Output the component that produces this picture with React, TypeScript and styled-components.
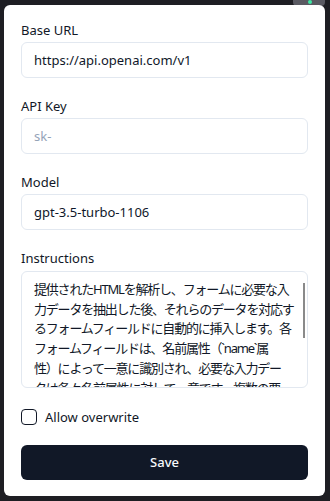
import { createGlobalStyle } from "styled-components";
import styled from "styled-components";

const Global = createGlobalStyle`
  html, body {
    margin: 0;
    padding: 0;
    background: #1e1e23;
  }
  * {
    box-sizing: border-box;
  }
`;

const Page = styled.div`
  position: relative;
  width: 330px;
  height: 501px;
  padding: 5px 5px 5px 4px;
  background: #1e1e23;
  font-family: "Noto Sans", "Noto Sans CJK JP", sans-serif;
`;

// the tab of the window behind, peeking out at the top
const BackTab = styled.div`
  position: absolute;
  top: -4px;
  right: 5px;
  width: 32px;
  height: 10px;
  border-radius: 4px;
  background: #5a5a62;

  &::after {
    content: "";
    position: absolute;
    left: 15px;
    top: 4px;
    width: 4px;
    height: 4px;
    border-radius: 50%;
    background: #3ee8a4;
  }
`;

const Panel = styled.form`
  position: relative;
  height: 491px;
  background: #ffffff;
  border-radius: 6px;
  padding: 15px 17px 16px;
  display: flex;
  flex-direction: column;
  gap: 18px;
`;

const Field = styled.div`
  display: flex;
  flex-direction: column;
  gap: 2px;
`;

const Label = styled.label`
  font-size: 13px;
  line-height: 20px;
  color: #111827;
`;

const Input = styled.input`
  height: 36px;
  width: 100%;
  padding: 0 12px;
  border: 1px solid #e2e8f0;
  border-radius: 6px;
  font-family: inherit;
  font-size: 13px;
  color: #0f172a;
  background: #fff;
  outline: none;

  &::placeholder {
    color: #94a3b8;
  }
`;

const AreaWrap = styled.div`
  position: relative;
  margin-top: 1px;
`;

const TextArea = styled.textarea`
  display: block;
  height: 117px;
  width: 100%;
  padding: 8px 4px 8px 12px;
  border: 1px solid #e2e8f0;
  border-radius: 6px;
  font-family: "Noto Sans", "Noto Sans CJK JP", sans-serif;
  font-size: 13px;
  letter-spacing: -1.2px;
  line-height: 19.7px;
  color: #111827;
  resize: none;
  outline: none;
  white-space: pre;
  overflow: hidden;
`;

// scroll thumb drawn over the textarea (headless hides native scrollbars)
const Thumb = styled.div`
  position: absolute;
  top: 12px;
  right: 3px;
  width: 2px;
  height: 55px;
  background: #8a8a8a;
`;

const CheckRow = styled.label`
  display: flex;
  align-items: center;
  gap: 8px;
  height: 20px;
  margin-top: 1px;
  font-size: 13px;
  color: #111827;
`;

const Box = styled.input`
  appearance: none;
  margin: 0;
  width: 16px;
  height: 16px;
  border: 1.5px solid #111827;
  border-radius: 4px;
  background: #fff;
`;

const SaveButton = styled.button`
  height: 36px;
  width: 100%;
  border: none;
  border-radius: 6px;
  background: #111827;
  color: #f8fafc;
  font-family: inherit;
  font-size: 13px;
  font-weight: 500;
`;

const instructions = [
  "提供されたHTMLを解析し、フォームに必要な入",
  "力データを抽出した後、それらのデータを対応す",
  "るフォームフィールドに自動的に挿入します。各",
  "フォームフィールドは、名前属性（`name`属",
  "性）によって一意に識別され、必要な入力デー",
  "タは各々名前属性に対して一意です。複数の要",
  "素が同じ名前属性を持つ場合は、最初に見つか",
  "った要素に値が挿入されます。入力データはJS",
  "ON形式で返され、キーは名前属性、値は入力",
  "値です。値が不明な場合は空文字列を設定して",
  "ください。余計な説明は不要です。",
].join("\n");

export default function App() {
  return (
    <>
      <Global />
      <Page>
        <BackTab />
        <Panel onSubmit={(e) => e.preventDefault()}>
          <Field>
            <Label>Base URL</Label>
            <Input defaultValue="https://api.openai.com/v1" />
          </Field>
          <Field>
            <Label>API Key</Label>
            <Input placeholder="sk-" />
          </Field>
          <Field>
            <Label>Model</Label>
            <Input defaultValue="gpt-3.5-turbo-1106" />
          </Field>
          <Field>
            <Label>Instructions</Label>
            <AreaWrap>
              <TextArea wrap="off" defaultValue={instructions} />
              <Thumb />
            </AreaWrap>
          </Field>
          <CheckRow>
            <Box type="checkbox" />
            Allow overwrite
          </CheckRow>
          <SaveButton type="submit">Save</SaveButton>
        </Panel>
      </Page>
    </>
  );
}
